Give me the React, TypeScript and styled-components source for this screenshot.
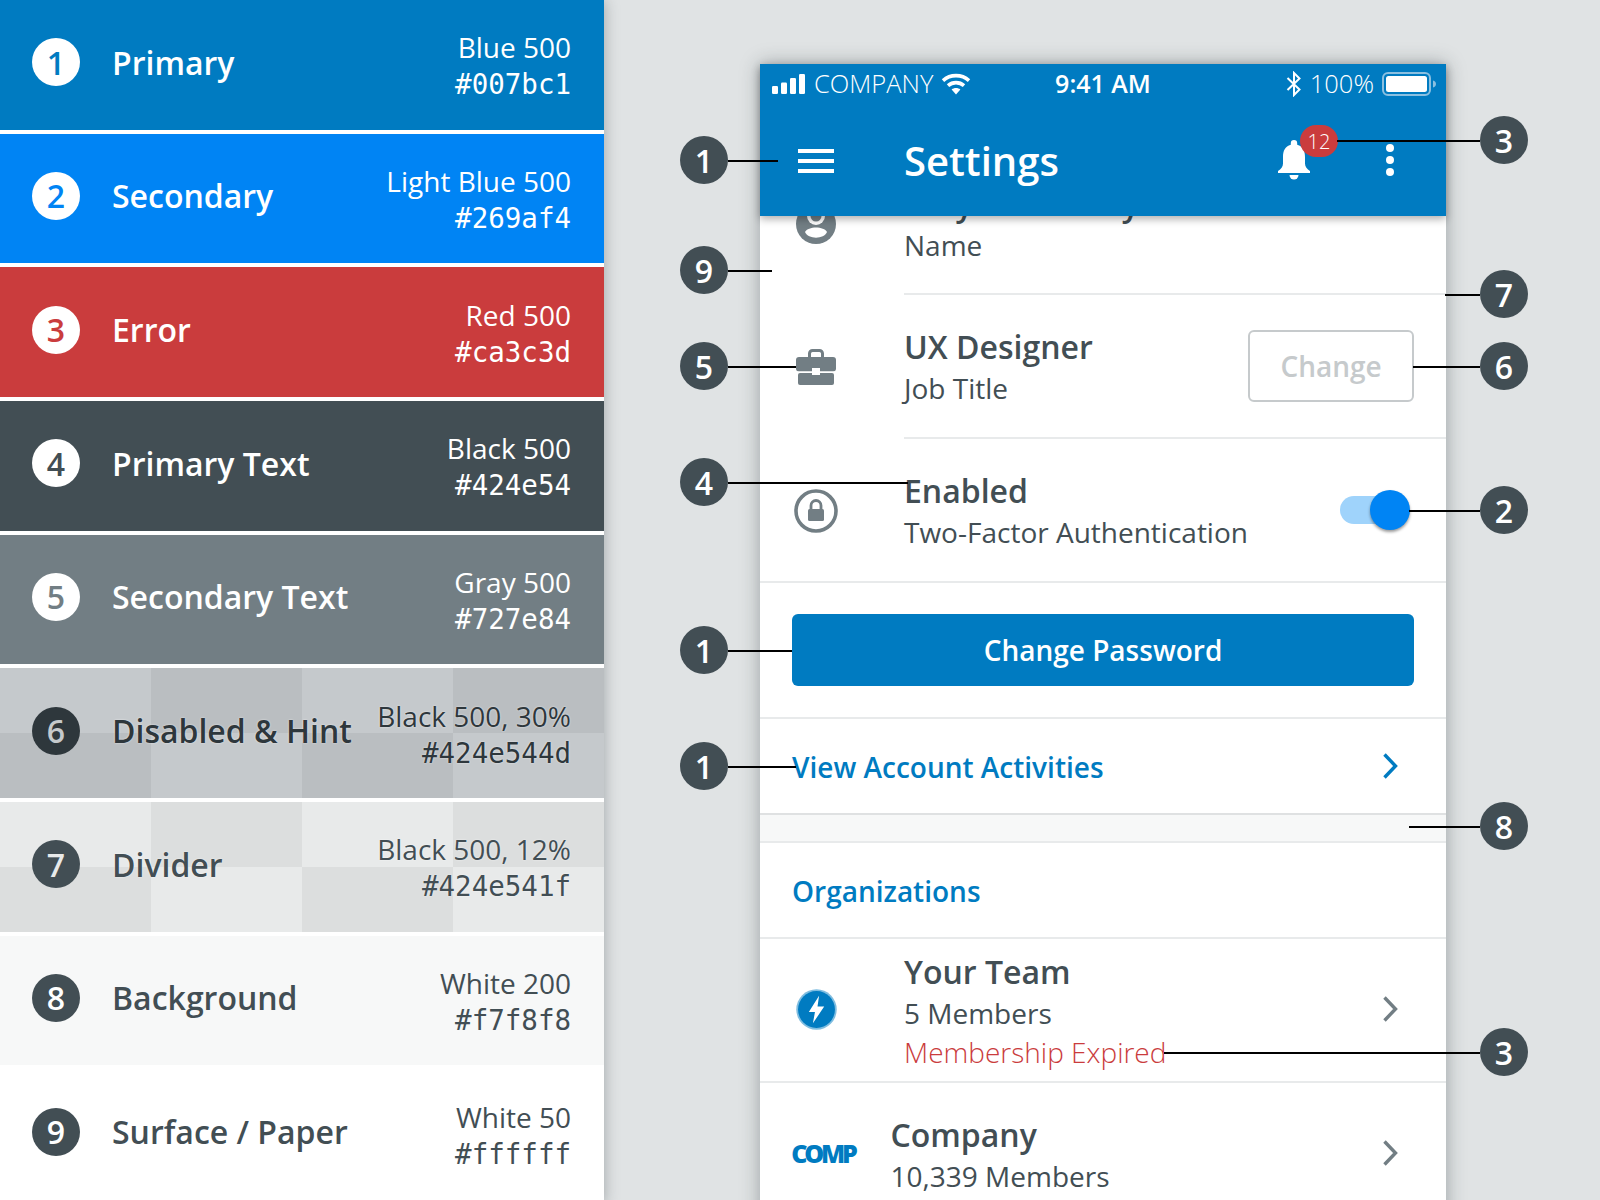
import styled, { createGlobalStyle, css } from "styled-components";

const GlobalStyle = createGlobalStyle`
  html, body {
    margin: 0;
    padding: 0;
    background: #e0e3e4;
  }
  * { box-sizing: border-box; }
`;

const BLUE = "#007bc1";
const RED = "#ca3c3d";
const INK = "#424e54";
const GRAY = "#727e84";
const LINE = "#e8eaeb";

const Page = styled.div`
  position: relative;
  display: flex;
  width: 1600px;
  height: 1200px;
  overflow: hidden;
  font-family: "Open Sans", sans-serif;
  color: ${INK};
`;

/* ---------- palette column ---------- */

const Palette = styled.div`
  position: relative;
  z-index: 1;
  flex: none;
  width: 604px;
  height: 1204px;
  box-shadow: 0 0 14px rgba(40, 50, 55, 0.35);
  background: #fff;
`;

const checker = (dark: string, light: string) => css`
  background: conic-gradient(${dark} 25%, ${light} 0 50%, ${dark} 0 75%, ${light} 0);
  background-size: 302px 100%;
  text-shadow: 0 0 2px rgba(255, 255, 255, 0.75);
`;

const Swatch = styled.div<{ $bg: string; $fg: string; $check?: string }>`
  display: flex;
  align-items: center;
  height: 129.67px;
  margin-bottom: 4px;
  padding: 0 33px 5px 32px;
  color: ${(p) => p.$fg};
  background: ${(p) => p.$bg};
  ${(p) => p.$check && checker(p.$check, p.$bg)}
`;

const SwatchDot = styled.div<{ $bg: string; $fg: string }>`
  flex: none;
  display: flex;
  align-items: center;
  justify-content: center;
  width: 48px;
  height: 48px;
  border-radius: 50%;
  font-size: 32px;
  font-weight: 600;
  text-shadow: none;
  color: ${(p) => p.$fg};
  background: ${(p) => p.$bg};
`;

const SwatchName = styled.div`
  margin-left: 32px;
  font-size: 32px;
  font-weight: 600;
  white-space: nowrap;
`;

const SwatchMeta = styled.div`
  margin-left: auto;
  margin-top: 8px;
  text-align: right;
  white-space: nowrap;
`;

const MetaName = styled.div`
  margin-top: -1px;
  font-size: 28px;
  font-weight: 400;
  line-height: 37px;
`;

const MetaHex = styled.div`
  font-family: "DejaVu Sans Mono", monospace;
  font-size: 27.5px;
  line-height: 36px;
`;

/* ---------- phone ---------- */

const Stage = styled.div`
  position: relative;
  flex: 1;
  padding: 64px 154px 0 156px;
`;

const Phone = styled.div`
  width: 686px;
  height: 1300px;
  background: #fff;
  box-shadow: 0 0 18px rgba(40, 50, 55, 0.38);
`;

const Header = styled.header`
  position: relative;
  z-index: 1;
  height: 152px;
  color: #fff;
  background: ${BLUE};
  box-shadow: 0 3px 8px rgba(0, 0, 0, 0.32);
`;

const StatusBar = styled.div`
  display: grid;
  grid-template-columns: 1fr auto 1fr;
  align-items: center;
  height: 40px;
  padding: 0 10px 0 12px;
  font-size: 25.5px;
  font-weight: 300;
`;

const StatusSide = styled.div<{ $end?: boolean }>`
  display: flex;
  align-items: center;
  justify-content: ${(p) => (p.$end ? "flex-end" : "flex-start")};
  gap: 8px;
`;

const StatusLabel = styled.span`
  margin-top: -3px;
`;

const Clock = styled.div`
  margin-top: -3px;
  margin-right: 2px;
  font-size: 25px;
  font-weight: 600;
`;

const AppBar = styled.div`
  display: flex;
  align-items: center;
  height: 112px;
`;

const MenuButton = styled.div`
  flex: none;
  display: flex;
  flex-direction: column;
  gap: 6px;
  width: 36px;
  margin: 2px 70px 0 38px;

  span {
    height: 4px;
    background: #fff;
  }
`;

const Title = styled.h1`
  flex: 1;
  margin: 2px 0 0;
  font-size: 40px;
  font-weight: 600;
  line-height: 50px;
`;

const BellWrap = styled.div`
  position: relative;
  flex: none;
  width: 32px;
  height: 40px;
  margin: 0 76px 0 0;
`;

const Badge = styled.div`
  position: absolute;
  top: -15px;
  left: 22px;
  display: flex;
  align-items: center;
  justify-content: center;
  width: 38px;
  height: 32px;
  border-radius: 16px;
  font-size: 20px;
  font-weight: 300;
  background: ${RED};
`;

const Kebab = styled.div`
  flex: none;
  display: flex;
  flex-direction: column;
  gap: 4px;
  margin-right: 52px;

  span {
    width: 8px;
    height: 8px;
    border-radius: 50%;
    background: #fff;
  }
`;

const Row = styled.div<{ $overlap?: boolean }>`
  display: flex;
  height: 144px;
  ${(p) => p.$overlap && "height: 143px; margin-top: -64px;"}
`;

const RowIcon = styled.div<{ $lift?: boolean }>`
  flex: none;
  display: flex;
  align-items: center;
  justify-content: center;
  width: 112px;
  ${(p) => p.$lift && "padding-bottom: 4px;"}
`;

const RowBody = styled.div<{ $bare?: boolean; $pull?: boolean }>`
  flex: 1;
  display: flex;
  align-items: center;
  justify-content: space-between;
  min-width: 0;
  margin-left: ${(p) => (p.$pull ? "18.5px" : "32px")};
  padding: 2px 32px 0 0;
  border-bottom: 2px solid ${(p) => (p.$bare ? "transparent" : LINE)};
`;

const RowDivider = styled.div`
  height: 2px;
  margin-top: -2px;
  background: ${LINE};
`;

const TextStack = styled.div`
  white-space: nowrap;
`;

const ItemTitle = styled.div`
  font-size: 32px;
  font-weight: 600;
  line-height: 42px;
`;

const ItemSub = styled.div<{ $error?: boolean }>`
  font-size: 28px;
  font-weight: ${(p) => (p.$error ? 300 : 400)};
  line-height: ${(p) => (p.$error ? "38px" : "40px")};
  color: ${(p) => (p.$error ? RED : INK)};
`;

const GhostButton = styled.button`
  width: 166px;
  height: 72px;
  margin-top: -2px;
  padding: 0;
  border: 2px solid #c6cacc;
  border-radius: 6px;
  font-family: inherit;
  font-size: 28px;
  font-weight: 600;
  color: #c6cacc;
  background: #fff;
`;

const Toggle = styled.div`
  position: relative;
  width: 60px;
  height: 28px;
  margin-top: -2px;
  margin-right: 14px;
  border-radius: 14px;
  background: #9fd3fb;
`;

const ToggleThumb = styled.div`
  position: absolute;
  top: -6px;
  right: -10px;
  width: 40px;
  height: 40px;
  border-radius: 50%;
  background: #0084f4;
  box-shadow: 0 2px 3px rgba(0, 0, 0, 0.4);
`;

const ActionBlock = styled.div`
  padding: 31px 32px;
  border-bottom: 2px solid ${LINE};
`;

const PrimaryButton = styled.button`
  display: block;
  width: 100%;
  height: 72px;
  border: 0;
  border-radius: 6px;
  font-family: inherit;
  font-size: 28px;
  font-weight: 600;
  color: #fff;
  background: ${BLUE};
`;

const LinkRow = styled.div`
  display: flex;
  align-items: center;
  justify-content: space-between;
  height: 94px;
  padding: 0 48px 0 32px;
  font-size: 28px;
  font-weight: 600;
  color: ${BLUE};
`;

const LinkText = styled.span`
  margin-top: 2px;
`;

const SectionGap = styled.div`
  height: 30px;
  border-top: 2px solid #dfe1e2;
  border-bottom: 2px solid ${LINE};
  background: #f7f8f8;
`;

const SectionTitle = styled.div`
  display: flex;
  align-items: center;
  height: 96px;
  padding: 2px 32px 0;
  border-bottom: 2px solid ${LINE};
  font-size: 28px;
  font-weight: 600;
  color: ${BLUE};
`;

const ChevronSlot = styled.div`
  flex: none;
  display: flex;
  margin: 0 16px 4px 0;
`;

const CompLogo = styled.div`
  margin: 0 0 4px 14px;
  font-size: 25px;
  font-weight: 800;
  letter-spacing: -3.2px;
  color: ${BLUE};
`;

/* ---------- numbered callouts ---------- */

const Callout = styled.div<{ $side: "left" | "right"; $y: number }>`
  position: absolute;
  z-index: 3;
  top: ${(p) => p.$y - 24}px;
  ${(p) => (p.$side === "left" ? "left: 76px;" : "right: 72px;")}
  display: flex;
  flex-direction: ${(p) => (p.$side === "left" ? "row" : "row-reverse")};
  align-items: center;
`;

const CalloutDot = styled.div`
  flex: none;
  display: flex;
  align-items: center;
  justify-content: center;
  width: 48px;
  height: 48px;
  border-radius: 50%;
  font-size: 32px;
  font-weight: 600;
  color: #fff;
  background: ${INK};
`;

const CalloutLine = styled.div<{ $len: number }>`
  width: ${(p) => p.$len}px;
  height: 2px;
  margin-top: 2px;
  background: #000;
`;

/* ---------- drawings ---------- */

const SignalIcon = () => (
  <svg width="34" height="20" viewBox="0 0 34 20" fill="#fff">
    <rect x="0" y="12" width="6" height="8" rx="1.2" />
    <rect x="9" y="8.5" width="6" height="11.5" rx="1.2" />
    <rect x="18" y="4" width="6" height="16" rx="1.2" />
    <rect x="27" y="0" width="6" height="20" rx="1.2" />
  </svg>
);

const WifiIcon = () => (
  <svg width="30" height="22" viewBox="0 0 30 22" fill="none" stroke="#fff" strokeWidth="3.6">
    <path d="M2 7.6C9.4 1 20.6 1 28 7.6" />
    <path d="M7 12.6c4.6-4 11.4-4 16 0" />
    <path d="M15 21.5l-4.4-5c2.6-2 6.2-2 8.8 0z" fill="#fff" stroke="none" />
  </svg>
);

const BluetoothIcon = () => (
  <svg width="16" height="26" viewBox="0 0 16 26" fill="none" stroke="#fff" strokeWidth="2">
    <path d="M1.5 7l12 11.5L8 24V2l5.5 5.5L1.5 19" />
  </svg>
);

const BatteryIcon = () => (
  <svg width="54" height="24" viewBox="0 0 54 24">
    <rect x="1" y="1" width="47" height="22" rx="5" fill="none" stroke="#8cc0e0" strokeWidth="2" />
    <rect x="4" y="4" width="41" height="16" rx="2.5" fill="#fff" />
    <path d="M51 8.5c1.8.6 3 1.8 3 3.5s-1.2 2.9-3 3.5z" fill="#8cc0e0" />
  </svg>
);

const BellIcon = () => (
  <svg width="32" height="40" viewBox="0 0 32 40" fill="#fff">
    <path d="M16 0a3.2 3.2 0 0 1 3.2 3.2v1.6C25 6.3 27 11 27 17v6.5c0 3.5 2 5.5 5 7.5v2H0v-2c3-2 5-4 5-7.5V17c0-6 2-10.7 7.8-12.2V3.2A3.2 3.2 0 0 1 16 0z" />
    <path d="M11.5 35h9a4.5 4.5 0 0 1-9 0z" />
  </svg>
);

const PersonIcon = () => (
  <svg width="40" height="40" viewBox="0 0 40 40">
    <circle cx="20" cy="20" r="20" fill={GRAY} />
    <circle cx="20" cy="12" r="9" fill="#fff" />
    <circle cx="20" cy="12" r="5.5" fill={GRAY} />
    <path d="M9 28c3-6 19-6 22 0-3 7.5-19 7.5-22 0z" fill="#fff" />
  </svg>
);

const BriefcaseIcon = () => (
  <svg width="40" height="36" viewBox="0 0 40 36" fill={GRAY}>
    <path d="M13.5 8V4.5A3 3 0 0 1 16.5 1.5h7a3 3 0 0 1 3 3V8" fill="none" stroke={GRAY} strokeWidth="3" />
    <rect x="0" y="8" width="40" height="14.5" rx="3" />
    <rect x="2" y="24" width="36" height="12" rx="2" />
    <rect x="0" y="22.5" width="40" height="1.5" fill="#fff" />
    <rect x="16" y="19" width="8" height="7" fill="#fff" />
  </svg>
);

const LockIcon = () => (
  <svg width="44" height="44" viewBox="0 0 44 44">
    <circle cx="22" cy="22" r="20" fill="none" stroke={GRAY} strokeWidth="3.6" />
    <path d="M17 20v-3.5a5 5 0 0 1 10 0V20" fill="none" stroke={GRAY} strokeWidth="2.8" />
    <rect x="14" y="20" width="16" height="12" rx="1.5" fill={GRAY} />
  </svg>
);

const BoltBadge = () => (
  <svg width="41" height="41" viewBox="0 0 40 40">
    <circle cx="20" cy="20" r="19.75" fill="#7fbde0" />
    <circle cx="20" cy="20" r="18" fill={BLUE} />
    <path d="M22.5 6.5L12.5 22.5h6L16.5 33.5 27.5 17h-6.5z" fill="#fff" />
  </svg>
);

const Chevron = ({ color }: { color: string }) => (
  <svg width="16" height="26" viewBox="0 0 16 26" fill="none" stroke={color} strokeWidth="3.4">
    <path d="M2.5 1.5L13.5 13 2.5 24.5" />
  </svg>
);

/* ---------- data ---------- */

const swatches = [
  { n: 1, name: "Primary", meta: "Blue 500", hex: "#007bc1", bg: BLUE, fg: "#fff", dotBg: "#fff", dotFg: BLUE },
  { n: 2, name: "Secondary", meta: "Light Blue 500", hex: "#269af4", bg: "#0084f4", fg: "#fff", dotBg: "#fff", dotFg: "#0084f4" },
  { n: 3, name: "Error", meta: "Red 500", hex: "#ca3c3d", bg: RED, fg: "#fff", dotBg: "#fff", dotFg: RED },
  { n: 4, name: "Primary Text", meta: "Black 500", hex: "#424e54", bg: INK, fg: "#fff", dotBg: "#fff", dotFg: INK },
  { n: 5, name: "Secondary Text", meta: "Gray 500", hex: "#727e84", bg: GRAY, fg: "#fff", dotBg: "#fff", dotFg: GRAY },
  { n: 6, name: "Disabled & Hint", meta: "Black 500, 30%", hex: "#424e544d", bg: "#c5c9cc", check: "#babec1", fg: "#2e373c", dotBg: "#2e373c", dotFg: "#c5c9cc" },
  { n: 7, name: "Divider", meta: "Black 500, 12%", hex: "#424e541f", bg: "#e8eaea", check: "#dcdede", fg: INK, dotBg: INK, dotFg: "#e8eaea" },
  { n: 8, name: "Background", meta: "White 200", hex: "#f7f8f8", bg: "#f7f8f8", fg: INK, dotBg: INK, dotFg: "#fff" },
  { n: 9, name: "Surface / Paper", meta: "White 50", hex: "#ffffff", bg: "#fff", fg: INK, dotBg: INK, dotFg: "#fff" },
];

// y is the centre of the dot, len how far the leader runs into the phone
const callouts: { n: number; side: "left" | "right"; y: number; len: number }[] = [
  { n: 1, side: "left", y: 160, len: 50 },
  { n: 9, side: "left", y: 270, len: 44 },
  { n: 5, side: "left", y: 366, len: 68 },
  { n: 4, side: "left", y: 482, len: 180 },
  { n: 1, side: "left", y: 650, len: 64 },
  { n: 1, side: "left", y: 766, len: 68 },
  { n: 3, side: "right", y: 140, len: 143 },
  { n: 7, side: "right", y: 294, len: 35 },
  { n: 6, side: "right", y: 366, len: 67 },
  { n: 2, side: "right", y: 510, len: 71 },
  { n: 8, side: "right", y: 826, len: 71 },
  { n: 3, side: "right", y: 1052, len: 316 },
];

const App = () => {
  return (
    <Page>
      <GlobalStyle />
      <Palette>
        {swatches.map((s) => (
          <Swatch key={s.n} $bg={s.bg} $fg={s.fg} $check={s.check}>
            <SwatchDot $bg={s.dotBg} $fg={s.dotFg}>{s.n}</SwatchDot>
            <SwatchName>{s.name}</SwatchName>
            <SwatchMeta>
              <MetaName>{s.meta}</MetaName>
              <MetaHex>{s.hex}</MetaHex>
            </SwatchMeta>
          </Swatch>
        ))}
      </Palette>

      <Stage>
        <Phone>
          <Header>
            <StatusBar>
              <StatusSide>
                <SignalIcon />
                <StatusLabel>COMPANY</StatusLabel>
                <WifiIcon />
              </StatusSide>
              <Clock>9:41 AM</Clock>
              <StatusSide $end>
                <BluetoothIcon />
                <StatusLabel>100%</StatusLabel>
                <BatteryIcon />
              </StatusSide>
            </StatusBar>
            <AppBar>
              <MenuButton>
                <span />
                <span />
                <span />
              </MenuButton>
              <Title>Settings</Title>
              <BellWrap>
                <BellIcon />
                <Badge>12</Badge>
              </BellWrap>
              <Kebab>
                <span />
                <span />
                <span />
              </Kebab>
            </AppBar>
          </Header>

          <Row $overlap>
            <RowIcon>
              <PersonIcon />
            </RowIcon>
            <RowBody>
              <TextStack>
                <ItemTitle>Amy Sumnerby</ItemTitle>
                <ItemSub>Name</ItemSub>
              </TextStack>
            </RowBody>
          </Row>

          <Row>
            <RowIcon>
              <BriefcaseIcon />
            </RowIcon>
            <RowBody>
              <TextStack>
                <ItemTitle>UX Designer</ItemTitle>
                <ItemSub>Job Title</ItemSub>
              </TextStack>
              <GhostButton>Change</GhostButton>
            </RowBody>
          </Row>

          <Row>
            <RowIcon>
              <LockIcon />
            </RowIcon>
            <RowBody $bare>
              <TextStack>
                <ItemTitle>Enabled</ItemTitle>
                <ItemSub>Two-Factor Authentication</ItemSub>
              </TextStack>
              <Toggle>
                <ToggleThumb />
              </Toggle>
            </RowBody>
          </Row>
          <RowDivider />

          <ActionBlock>
            <PrimaryButton>Change Password</PrimaryButton>
          </ActionBlock>

          <LinkRow>
            <LinkText>View Account Activities</LinkText>
            <Chevron color={BLUE} />
          </LinkRow>

          <SectionGap />
          <SectionTitle>Organizations</SectionTitle>

          <Row>
            <RowIcon $lift>
              <BoltBadge />
            </RowIcon>
            <RowBody $bare>
              <TextStack>
                <ItemTitle>Your Team</ItemTitle>
                <ItemSub>5 Members</ItemSub>
                <ItemSub $error>Membership Expired</ItemSub>
              </TextStack>
              <ChevronSlot>
                <Chevron color={GRAY} />
              </ChevronSlot>
            </RowBody>
          </Row>
          <RowDivider />

          <Row>
            <RowIcon>
              <CompLogo>COMP</CompLogo>
            </RowIcon>
            <RowBody $bare $pull>
              <TextStack>
                <ItemTitle>Company</ItemTitle>
                <ItemSub>10,339 Members</ItemSub>
              </TextStack>
              <ChevronSlot>
                <Chevron color={GRAY} />
              </ChevronSlot>
            </RowBody>
          </Row>
        </Phone>

        {callouts.map((c) => (
          <Callout key={`${c.side}-${c.y}`} $side={c.side} $y={c.y}>
            <CalloutDot>{c.n}</CalloutDot>
            <CalloutLine $len={c.len} />
          </Callout>
        ))}
      </Stage>
    </Page>
  );
};

export default App;
